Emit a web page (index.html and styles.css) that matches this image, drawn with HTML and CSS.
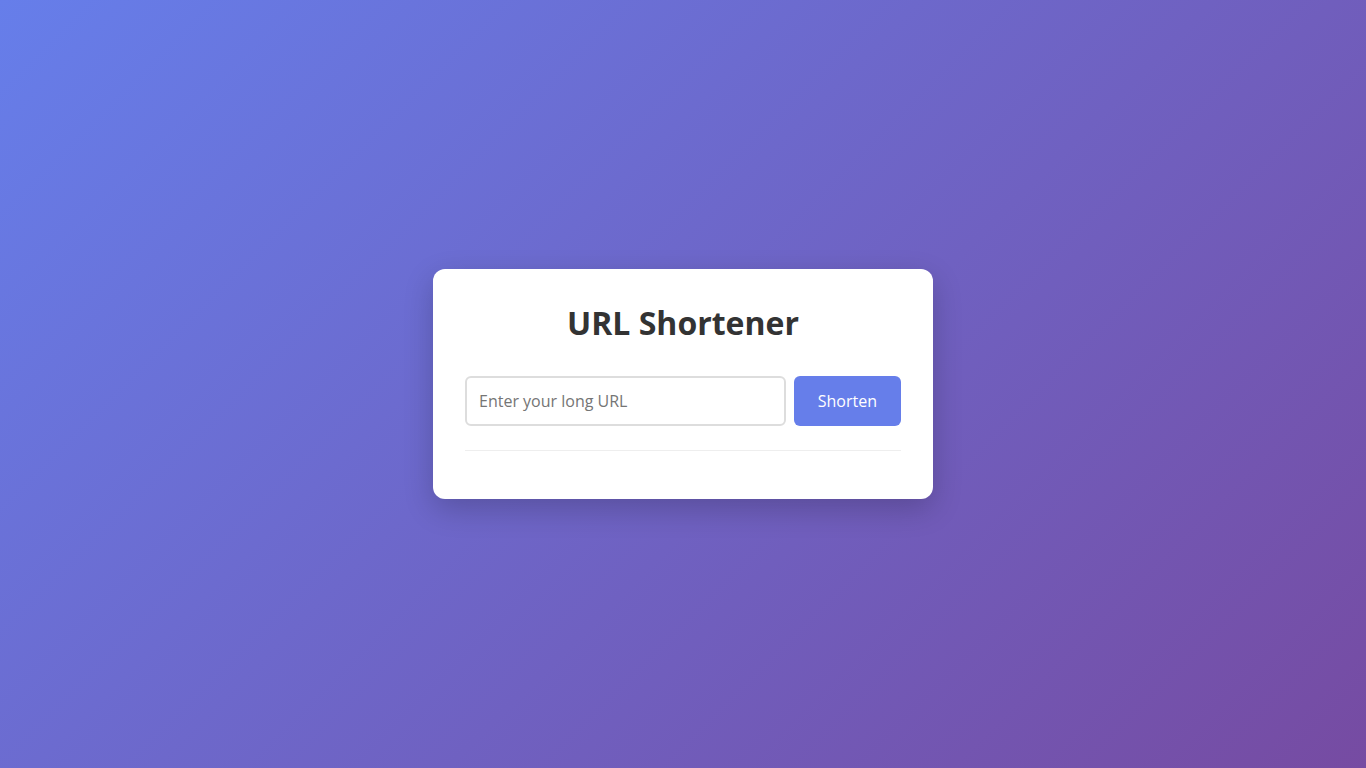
FILE: index.html
```html
<!DOCTYPE html>
<html lang="en">
<head>
<meta charset="utf-8">
<title>URL Shortener</title>
<link rel="stylesheet" href="styles.css">
</head>
<body>
<main class="card">
  <h1 class="title">URL Shortener</h1>
  <form class="form" onsubmit="return false;">
    <input class="url-input" type="text" placeholder="Enter your long URL">
    <button class="btn" type="submit">Shorten</button>
  </form>
  <div class="result"></div>
</main>
</body>
</html>
```

FILE: styles.css
```css
* { box-sizing: border-box; }
html, body { margin: 0; height: 100%; }
body {
  font-family: "Open Sans", "Liberation Sans", sans-serif;
  background: linear-gradient(135deg, #667eea 0%, #764ba2 100%);
  display: flex;
  align-items: center;
  justify-content: center;
  min-height: 100vh;
}
.card {
  width: 500px;
  background: #fff;
  border-radius: 12px;
  padding: 32px;
  box-shadow: 0 10px 30px rgba(0, 0, 0, 0.2);
}
.title {
  margin: 0 0 32px;
  font-size: 32px;
  font-weight: 700;
  color: #333;
  text-align: center;
  line-height: 1.362;
}
.form {
  display: flex;
  gap: 8px;
  margin: 0 0 24px;
}
.url-input {
  flex: 1;
  min-width: 0;
  height: 50px;
  border: 2px solid #ddd;
  border-radius: 6px;
  padding: 0 12px;
  font-family: inherit;
  font-size: 16px;
  color: #333;
  outline: none;
}
.url-input::placeholder { color: #757575; }
.btn {
  height: 50px;
  padding: 0 24px;
  border: none;
  border-radius: 6px;
  background: #667eea;
  color: #fff;
  font-family: inherit;
  font-size: 16px;
  cursor: pointer;
}
.result {
  border-top: 1px solid #eee;
  height: 17px;
}
```
